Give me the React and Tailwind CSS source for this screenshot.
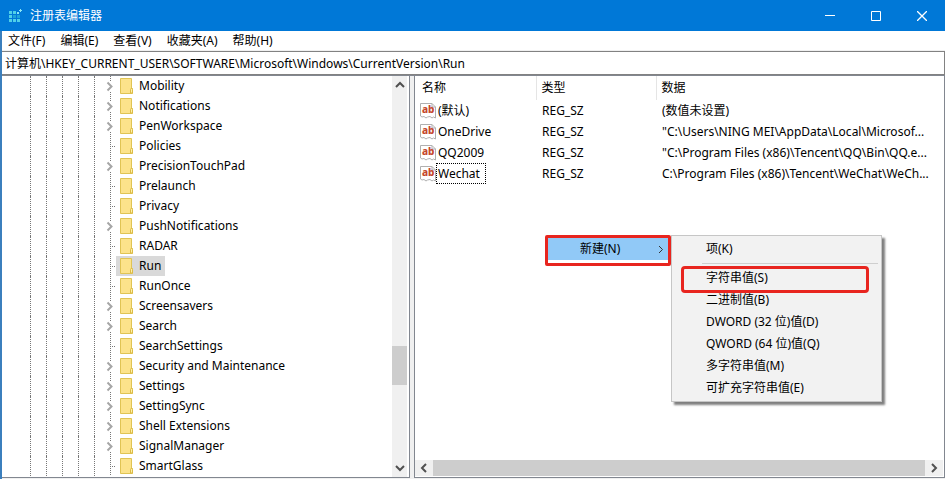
import React, { useState } from "react";

const MENUS = ["文件(F)", "编辑(E)", "查看(V)", "收藏夹(A)", "帮助(H)"];

const KEYS = [
  { name: "Mobility", children: true },
  { name: "Notifications", children: true },
  { name: "PenWorkspace", children: true },
  { name: "Policies", children: false },
  { name: "PrecisionTouchPad", children: true },
  { name: "Prelaunch", children: false },
  { name: "Privacy", children: false },
  { name: "PushNotifications", children: true },
  { name: "RADAR", children: false },
  { name: "Run", children: false },
  { name: "RunOnce", children: false },
  { name: "Screensavers", children: true },
  { name: "Search", children: true },
  { name: "SearchSettings", children: false },
  { name: "Security and Maintenance", children: true },
  { name: "Settings", children: true },
  { name: "SettingSync", children: true },
  { name: "Shell Extensions", children: true },
  { name: "SignalManager", children: true },
  { name: "SmartGlass", children: false },
];

const VALUES = [
  { name: "(默认)", type: "REG_SZ", data: "(数值未设置)" },
  { name: "OneDrive", type: "REG_SZ", data: '"C:\\Users\\NING MEI\\AppData\\Local\\Microsof...' },
  { name: "QQ2009", type: "REG_SZ", data: '"C:\\Program Files (x86)\\Tencent\\QQ\\Bin\\QQ.e...' },
  { name: "Wechat", type: "REG_SZ", data: "C:\\Program Files (x86)\\Tencent\\WeChat\\WeCh..." },
];

const NEW_ITEMS = [
  "字符串值(S)",
  "二进制值(B)",
  "DWORD (32 位)值(D)",
  "QWORD (64 位)值(Q)",
  "多字符串值(M)",
  "可扩充字符串值(E)",
];

function AppIcon() {
  return (
    <svg width="14" height="14" viewBox="0 0 14 14" shapeRendering="crispEdges">
      <path fill="#4fd0e8" d="M0 2h3v3H0zM4 2h3v3H4zM0 6h3v3H0zM0 10h3v3H0zM4 10h3v3H4zM8 10h3v3H8z" />
      <path fill="#1fa3d8" d="M4 6h3v3H4zM8 6h3v3H8z" />
      <path fill="#8be6f5" d="M11 0h1v1h1v1h-1v1h-1V2h-1V1h1zM8 3h2v2H8z" />
    </svg>
  );
}

// Dotted connector in front of a key, with an expand arrow when it has subkeys
function Node({ expandable }) {
  return (
    <svg className="shrink-0" width="12" height="20" viewBox="0 0 12 20" fill="none">
      {expandable ? (
        <>
          <path d="M6.5 0v5M6.5 16v4" stroke="#777" strokeDasharray="1 1" />
          <path d="M3.500 6.500l4 4-4 4" stroke="#a6a6a6" strokeWidth="2" />
        </>
      ) : (
        <path d="M6.5 0v20M8 10.5h4" stroke="#777" strokeDasharray="1 1" />
      )}
    </svg>
  );
}

function Folder() {
  return (
    <svg className="shrink-0" width="13" height="16" viewBox="0 0 13 16">
      <path d="M.5.5h11v10h1v5H.5z" fill="#fce38b" stroke="#e0c454" />
      <path d="M10.500 15V11.500l1-1.500 1 1.500V15z" fill="#fff0a8" stroke="#dcbb45" />
    </svg>
  );
}

function StringIcon() {
  return (
    <svg className="shrink-0" width="16" height="16" viewBox="0 0 16 16">
      <path
        d="M.5.5h11.500l3.500 3.500v11l-2-1-1.500 1-2-1.500-2.500.5-1.500 1-2-1.500-2 .5-1.500-1z"
        fill="#fff"
        stroke="#b0b0b0"
      />
      <path d="M12 .5V4h3.500" fill="none" stroke="#b0b0b0" />
      <text x="2" y="10" fontFamily="Noto Sans, sans-serif" fontSize="10" fontWeight="800" fill="#c5472d">ab</text>
    </svg>
  );
}

function Arrow({ d }) {
  return (
    <svg width="10" height="10" viewBox="0 0 10 10" fill="none" stroke="#505050" strokeWidth="2">
      <path d={d} />
    </svg>
  );
}

function TitleBar() {
  return (
    <header className="flex h-[31px] shrink-0 items-center bg-[#0078d7] text-white">
      <div className="flex flex-1 items-center gap-[7px] pl-[9px]">
        <AppIcon />
        <h1 className="text-xs">注册表编辑器</h1>
      </div>
      <button type="button" aria-label="最小化" className="flex h-full w-[46px] items-center justify-center">
        <svg width="10" height="10" stroke="currentColor"><path d="M0 4.500h10" /></svg>
      </button>
      <button type="button" aria-label="最大化" className="flex h-full w-[46px] items-center justify-center">
        <svg width="10" height="10" stroke="currentColor" fill="none"><path d="M.5.5h9v9h-9z" /></svg>
      </button>
      <button type="button" aria-label="关闭" className="flex h-full w-[46px] items-center justify-center">
        <svg width="10" height="10" stroke="currentColor" strokeWidth="1.300"><path d="M0 0l10 10M10 0L0 10" /></svg>
      </button>
    </header>
  );
}

function KeyTree({ selected, onSelect }) {
  return (
    <section className="flex w-[408px] shrink-0 border-r border-b border-[#828790] bg-white">
      <ul className="flex-1 overflow-hidden">
        {KEYS.map((key) => (
          <li key={key.name} className="flex h-5 items-center pl-7">
            <span className="h-5 w-4 border-l border-dotted border-[#777]" />
            <span className="h-5 w-4 border-l border-dotted border-[#777]" />
            <span className="h-5 w-4 border-l border-dotted border-[#777]" />
            <span className="h-5 w-4 border-l border-dotted border-[#777]" />
            <span className="h-5 w-[10px] border-l border-dotted border-[#777]" />
            <Node expandable={key.children} />
            <button
              type="button"
              onClick={() => onSelect(key.name)}
              className={`flex h-5 items-center gap-[6px] px-1 whitespace-nowrap ${selected === key.name ? "bg-[#d9d9d9]" : ""}`}
            >
              <Folder />
              {key.name}
            </button>
          </li>
        ))}
      </ul>
      <div className="mr-[2px] flex w-[15px] flex-col bg-[#f0f0f0]">
        <button type="button" aria-label="向上滚动" className="flex h-[18px] items-center justify-center">
          <Arrow d="M1 7l4-4 4 4" />
        </button>
        <div className="flex flex-1 flex-col">
          <div className="flex-[252]" />
          <div className="h-[39px] bg-[#cdcdcd]" />
          <div className="flex-[74]" />
        </div>
        <button type="button" aria-label="向下滚动" className="flex h-[18px] items-center justify-center">
          <Arrow d="M1 3l4 4 4-4" />
        </button>
      </div>
    </section>
  );
}

function ValueTable() {
  return (
    <table className="w-full table-fixed text-left">
      <thead>
        <tr className="h-6">
          <th className="w-[121px] border-r border-[#e5e5e5] pl-[7px] font-normal">名称</th>
          <th className="w-[120px] border-r border-[#e5e5e5] pl-[5px] font-normal">类型</th>
          <th className="pl-[5px] font-normal">数据</th>
        </tr>
      </thead>
      <tbody>
        {VALUES.map((value) => (
          <tr key={value.name} className="h-[21px]">
            <td className="pl-[5px]">
              <div className="flex items-center">
                <StringIcon />
                <span
                  className={`border border-dotted pl-px leading-[19px] ${value.name === "Wechat" ? "border-black pr-[5px]" : "border-transparent"}`}
                >
                  {value.name}
                </span>
              </div>
            </td>
            <td className="pl-[6px]">{value.type}</td>
            <td className="pl-[6px] whitespace-nowrap">{value.data}</td>
          </tr>
        ))}
      </tbody>
    </table>
  );
}

function NewMenu() {
  return (
    <div className="absolute top-[159px] left-[130px] flex items-start">
      <div className="w-[126px] rounded-xs border-3 border-[#e8251f] bg-white pb-[3px]">
        <button type="button" className="flex h-[22px] w-full items-center justify-between bg-[#91c9f7] pr-1 pl-8">
          新建(N)
          <svg width="6" height="9" viewBox="0 0 6 9" fill="none" stroke="#333"><path d="M1 1l3.500 3.500L1 8" /></svg>
        </button>
      </div>
      <div className="w-[211px] border border-[#c6c6c6] bg-[#f2f2f2] py-[2px] shadow-[3px_3px_2px_rgba(0,0,0,0.5)]">
        <button type="button" className="flex h-[22px] w-full items-center pl-[34px]">项(K)</button>
        <hr className="my-[3px] mr-[3px] ml-[30px] border-[#cfcfcf]" />
        <ul>
          {NEW_ITEMS.map((item, i) => (
            <li key={item} className="relative">
              <button type="button" className="flex h-[22px] w-full items-center pl-[34px]">{item}</button>
              {i === 0 && (
                <span className="pointer-events-none absolute -top-px right-3 left-[9px] h-[27px] rounded-sm border-3 border-[#e8251f]" />
              )}
            </li>
          ))}
        </ul>
      </div>
    </div>
  );
}

export default function App() {
  const [selected, setSelected] = useState("Run");
  const [path, setPath] = useState("计算机\\HKEY_CURRENT_USER\\SOFTWARE\\Microsoft\\Windows\\CurrentVersion\\Run");

  return (
    <div className="flex h-screen flex-col overflow-hidden bg-[#f0f0f0] font-['Noto_Sans','Noto_Sans_CJK_SC',sans-serif] text-xs text-black">
      <TitleBar />
      <div className="flex min-h-0 flex-1 flex-col border-l-2 border-[#3b7fbd]">
        <nav className="flex h-[19px] shrink-0 items-center gap-[15px] bg-white pl-[6px]">
          {MENUS.map((menu) => (
            <button key={menu} type="button">{menu}</button>
          ))}
        </nav>
        <input
          aria-label="地址"
          value={path}
          onChange={(e) => setPath(e.target.value)}
          className="mt-px h-6 shrink-0 border border-l-0 border-[#828282] bg-white pl-[3px] outline-none"
        />
        <main className="flex min-h-0 flex-1 border-t border-[#828790] pb-px">
          <KeyTree selected={selected} onSelect={setSelected} />
          <section className="relative ml-1 flex min-w-0 flex-1 flex-col border-x border-b border-[#828790] bg-white">
            <div className="flex-1">
              <ValueTable />
            </div>
            <div className="mr-px mb-px flex h-4 bg-[#f0f0f0]">
              <button type="button" aria-label="向左滚动" className="flex w-[18px] items-center justify-center">
                <Arrow d="M7 1L3 5l4 4" />
              </button>
              <div className="flex-1 bg-[#cdcdcd]" />
              <button type="button" aria-label="向右滚动" className="flex w-[18px] items-center justify-center">
                <Arrow d="M3 1l4 4-4 4" />
              </button>
            </div>
            <NewMenu />
          </section>
        </main>
      </div>
    </div>
  );
}
